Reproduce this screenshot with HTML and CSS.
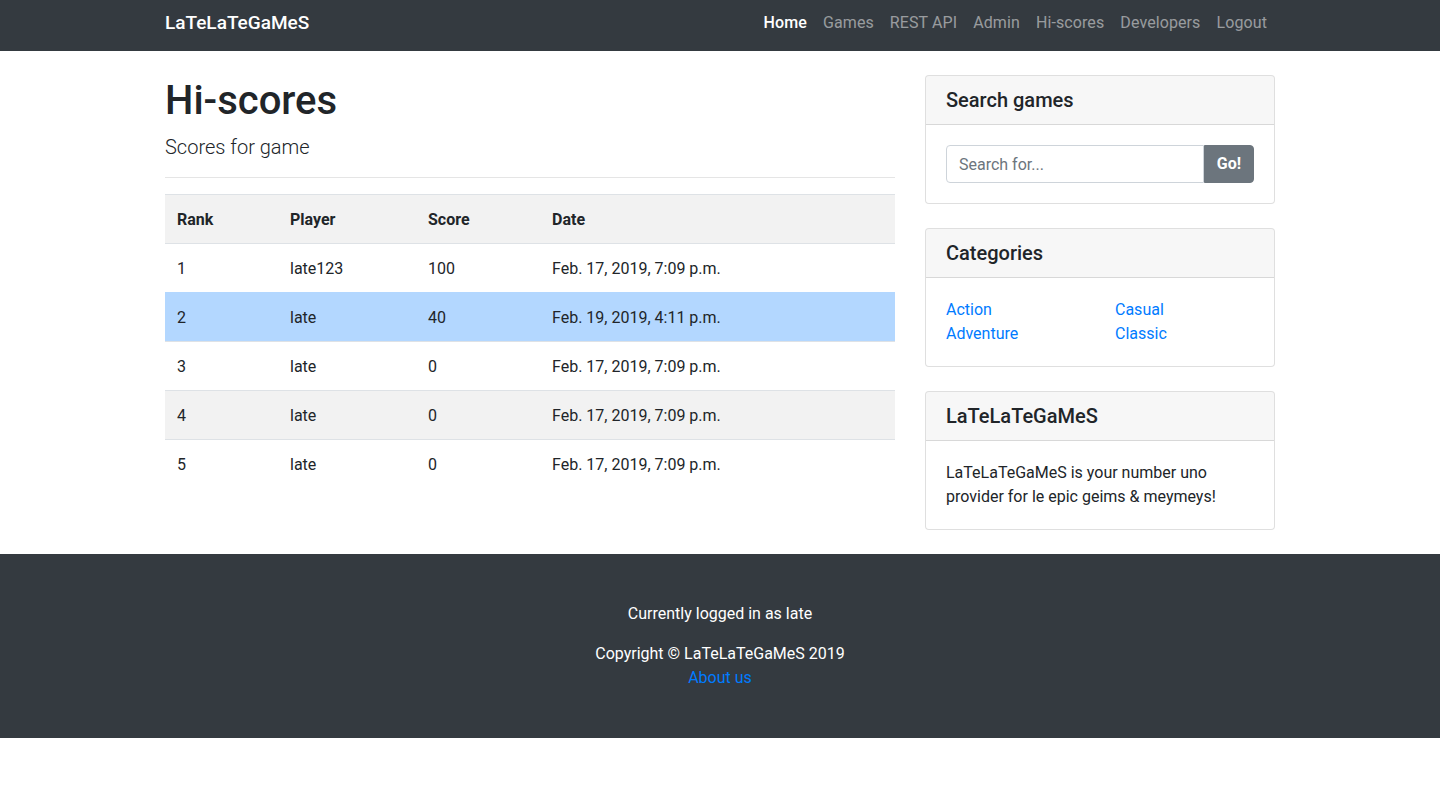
FILE: index.html
```html
<!DOCTYPE html>
<html lang="en">
<head>
<meta charset="utf-8">
<title>Hi-scores - LaTeLaTeGaMeS</title>
<link rel="stylesheet" href="styles.css">
</head>
<body>
<nav class="navbar">
  <div class="container nav-inner">
    <a class="brand" href="#">LaTeLaTeGaMeS</a>
    <ul class="nav-links">
      <li><a class="active" href="#">Home</a></li>
      <li><a href="#">Games</a></li>
      <li><a href="#">REST API</a></li>
      <li><a href="#">Admin</a></li>
      <li><a href="#">Hi-scores</a></li>
      <li><a href="#">Developers</a></li>
      <li><a href="#">Logout</a></li>
    </ul>
  </div>
</nav>

<div class="container main">
  <div class="col-main">
    <h1 class="title">Hi-scores</h1>
    <p class="lead">Scores for game</p>
    <hr class="divider">
    <table class="scores">
      <colgroup>
        <col class="c1"><col class="c2"><col class="c3"><col class="c4">
      </colgroup>
      <tbody>
        <tr class="head"><th>Rank</th><th>Player</th><th>Score</th><th>Date</th></tr>
        <tr><td>1</td><td>late123</td><td>100</td><td>Feb. 17, 2019, 7:09 p.m.</td></tr>
        <tr class="mine"><td>2</td><td>late</td><td>40</td><td>Feb. 19, 2019, 4:11 p.m.</td></tr>
        <tr><td>3</td><td>late</td><td>0</td><td>Feb. 17, 2019, 7:09 p.m.</td></tr>
        <tr class="stripe"><td>4</td><td>late</td><td>0</td><td>Feb. 17, 2019, 7:09 p.m.</td></tr>
        <tr><td>5</td><td>late</td><td>0</td><td>Feb. 17, 2019, 7:09 p.m.</td></tr>
      </tbody>
    </table>
  </div>

  <aside class="col-side">
    <div class="card">
      <h5 class="card-header">Search games</h5>
      <div class="card-body">
        <div class="input-group">
          <input class="form-control" type="text" placeholder="Search for...">
          <button class="btn" type="button">Go!</button>
        </div>
      </div>
    </div>

    <div class="card">
      <h5 class="card-header">Categories</h5>
      <div class="card-body">
        <div class="cats">
          <ul class="cat-list">
            <li><a href="#">Action</a></li>
            <li><a href="#">Adventure</a></li>
          </ul>
          <ul class="cat-list">
            <li><a href="#">Casual</a></li>
            <li><a href="#">Classic</a></li>
          </ul>
        </div>
      </div>
    </div>

    <div class="card">
      <h5 class="card-header">LaTeLaTeGaMeS</h5>
      <div class="card-body">LaTeLaTeGaMeS is your number uno provider for le epic geims &amp; meymeys!</div>
    </div>
  </aside>
</div>

<footer class="footer">
  <div class="container footer-inner">
    <p class="f-line">Currently logged in as late</p>
    <p class="f-copy">Copyright &copy; LaTeLaTeGaMeS 2019<br><a href="#">About us</a></p>
  </div>
</footer>
</body>
</html>
```

FILE: styles.css
```css
* { box-sizing: border-box; }

html, body {
  margin: 0;
  padding: 0;
}

body {
  font-family: Roboto, "Liberation Sans", Arial, sans-serif;
  font-size: 16px;
  line-height: 1.5;
  color: #212529;
  background: #fff;
}

a { text-decoration: none; color: #007bff; }

.container {
  width: 1140px;
  margin: 0 auto;
  padding: 0 15px;
}

/* navbar */
.navbar {
  background: #343a40;
  padding: 3px 0 8px;
}
.nav-inner {
  display: flex;
  align-items: center;
  justify-content: space-between;
}
.brand {
  color: #fff;
  font-size: 19px;
  font-weight: 500;
  line-height: 40px;
}
.nav-links {
  display: flex;
  list-style: none;
  margin: 0;
  padding: 0;
}
.nav-links a {
  display: block;
  padding: 8px 8px;
  line-height: 24px;
  color: rgba(255,255,255,.5);
  letter-spacing: 0.1px;
}
.nav-links a.active { color: #fff; font-weight: 500; }

/* main */
.main {
  display: flex;
  gap: 30px;
}
.col-main {
  flex: none;
  width: 730px;
}
.col-side {
  flex: none;
  width: 350px;
}

.title {
  margin: 24px 0 8px;
  padding-top: 2px;
  height: 48px;
  font-size: 40px;
  line-height: 48px;
  font-weight: 500;
}
.lead {
  margin: 0 0 16px;
  padding-top: 1px;
  height: 30px;
  font-size: 20px;
  line-height: 30px;
  font-weight: 300;
}
.divider {
  margin: 0 0 16px;
  border: 0;
  border-top: 1px solid rgba(0,0,0,.1);
  height: 0;
}

.scores {
  width: 100%;
  border-collapse: collapse;
  margin-bottom: 16px;
}
.scores .c1 { width: 113px; }
.scores .c2 { width: 138px; }
.scores .c3 { width: 124px; }
.scores th,
.scores td {
  text-align: left;
  padding: 13px 12px 11px;
  line-height: 24px;
  border-top: 1px solid #dee2e6;
  vertical-align: top;
}
.scores th { font-weight: 700; }
.scores tr.head { background: #f2f2f2; }
.scores tr.stripe { background: #f2f2f2; }
.scores tr.mine { background: #b3d7ff; }
.scores tr.mine td { border-top-color: #b3d7ff; }

/* cards */
.card {
  margin: 24px 0;
  border: 1px solid rgba(0,0,0,.125);
  border-radius: 4px;
  background: #fff;
}
.card-header {
  margin: 0;
  padding: 12px 20px;
  font-size: 20px;
  line-height: 24px;
  font-weight: 500;
  background: rgba(0,0,0,.03);
  border-bottom: 1px solid rgba(0,0,0,.125);
  border-radius: 3px 3px 0 0;
}
.card-body {
  padding: 20px;
}

.input-group {
  display: flex;
}
.form-control {
  flex: 1;
  min-width: 0;
  height: 38px;
  padding: 6px 12px;
  font-family: inherit;
  font-size: 16px;
  line-height: 24px;
  color: #495057;
  border: 1px solid #ced4da;
  border-radius: 4px 0 0 4px;
  outline: none;
}
.form-control::placeholder { color: #6c757d; }
.btn {
  height: 38px;
  padding: 6px 12px;
  font-family: inherit;
  font-size: 16px;
  font-weight: 700;
  line-height: 24px;
  color: #fff;
  background: #6c757d;
  border: 1px solid #6c757d;
  border-radius: 0 4px 4px 0;
}

.cats {
  display: flex;
  margin: 0 -15px;
}
.cat-list {
  flex: none;
  list-style: none;
  margin: 0;
  padding: 0 15px;
  width: 169px;
}

/* footer */
.footer {
  background: #343a40;
  padding: 48px 0;
  margin-bottom: 55px;
}
.footer-inner {
  text-align: center;
  color: #fff;
}
.f-line { margin: 0 0 16px; }
.f-copy { margin: 0; }
```
